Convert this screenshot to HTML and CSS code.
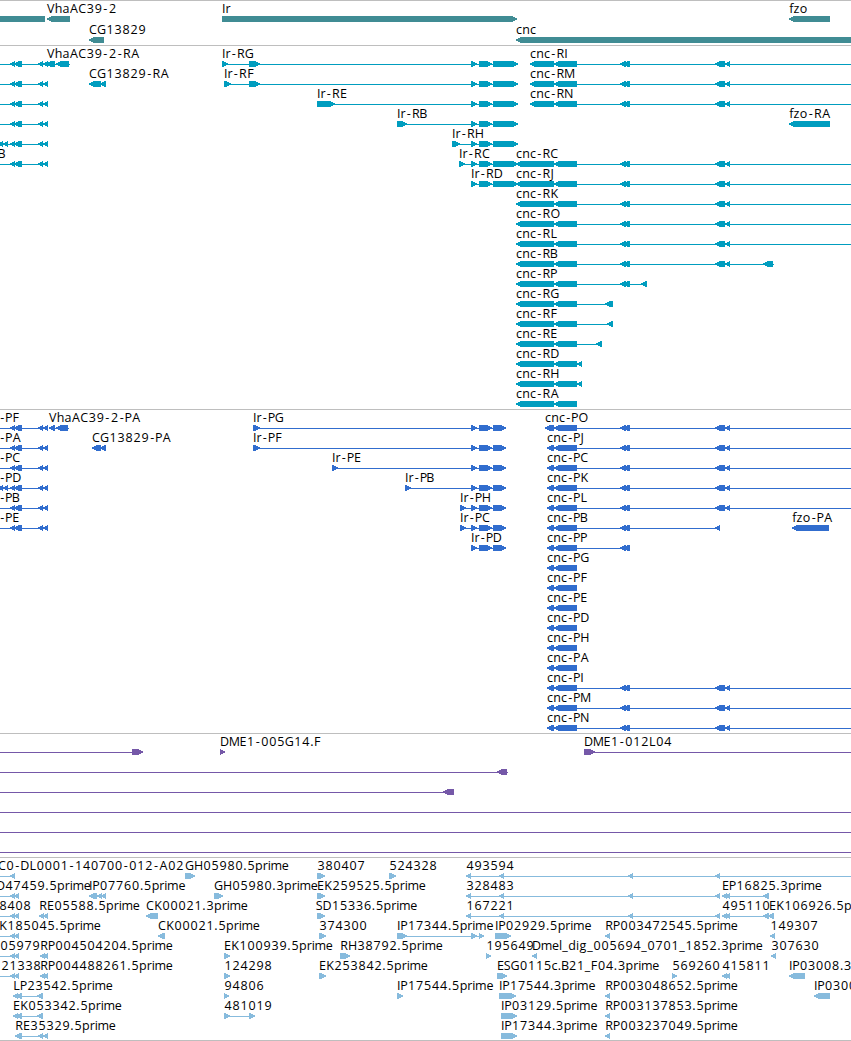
FILE: index.html
```html
<!DOCTYPE html>
<html lang="en">
<head>
<meta charset="utf-8">
<title>Genome tracks</title>
<link rel="stylesheet" href="styles.css">
</head>
<body>
<main class="browser" id="browser"></main>
<script src="tracks.js"></script>
</body>
</html>
```

FILE: styles.css
```css
body {
  margin: 0;
  background: #fff;
}

.browser {
  display: flex;
  flex-direction: column;
  width: 851px;
  height: 1041px;
  overflow: hidden;
}

.track {
  display: flex;
  flex-direction: column;
  flex: none;
  border-top: 1px solid #bebebe;
  padding-bottom: 3px;
}

.row {
  display: block;
  flex: none;
  width: 851px;
  height: 20px;
  overflow: visible;
}

.gene { color: #408c94; padding-bottom: 2px; }
.gene .row { height: 21px; }
.transcript { color: #009dbf; }
.protein { color: #316dce; }
.clone { color: #7558a8; }
.est { color: #87bbdd; padding-bottom: 2px; border-bottom: 1px solid #bebebe; }

.shape {
  fill: currentColor;
  shape-rendering: crispEdges;
}

.label {
  font: 12.5px "Open Sans", "Noto Sans", sans-serif;
  fill: #000;
}
```

FILE: tracks.js
```js
// Row syntax: "@x text" label, "a-b" line, "=a-b" plain bar,
// "<a-b" / ">a-b" exon pointing left / right. Items separated by "|".
const LEFT = "0-48|<10-15|<14-22|<38-43|<43-48";
const LEFT_D = LEFT + "|<-2-3|<3-8";
const IR = ">471-477|>479-492|>493-518";
const IRP = ">471-477|>479-492|>493-506";
const MID = "<620-626|<623-630";
const FAR = MID + "|<715-725|<725-730";
const CNC = "<516-554|<554-577";
const CNCP = "<547-554|<554-577";
const EST = "0-19|<10-15|<14-19";
const CHAIN = "<466-471|<499-504|<628-633|<715-720";

const tracks = [
  ["gene", [
    "=0-45|@47 VhaAC39-2|<47-70|@222 Ir|>222-517|@789 fzo|<789-830",
    "@89 CG13829|<89-104|@516 cnc|<516-860"
  ]],
  ["transcript", [
    `${LEFT}|@47 VhaAC39-2-RA|44-70|<46-55|<56-69|@222 Ir-RG|222-518|>222-228|>249-260|${IR}|@530 cnc-RI|530-851|<530-554|<554-577|${FAR}`,
    `${LEFT}|@89 CG13829-RA|<89-101|<100-106|@224 Ir-RF|224-518|>224-231|>249-260|${IR}|@530 cnc-RM|530-851|<530-554|<554-577|${FAR}`,
    `${LEFT}|@317 Ir-RE|317-518|>317-335|${IR}|@530 cnc-RN|530-851|<530-554|<554-577|${FAR}`,
    `${LEFT}|@397 Ir-RB|397-518|>397-407|${IR}|@789 fzo-RA|<789-830`,
    `${LEFT_D}|@452 Ir-RH|452-518|>452-460|${IR}`,
    `@-2 B|${LEFT}|@459 Ir-RC|459-518|>459-465|${IR}|@516 cnc-RC|516-851|${CNC}|${FAR}`,
    `@471 Ir-RD|471-518|${IR}|@516 cnc-RJ|516-851|${CNC}|${FAR}`,
    `@516 cnc-RK|516-851|${CNC}|${FAR}`,
    `@516 cnc-RO|516-851|${CNC}|${FAR}`,
    `@516 cnc-RL|516-851|${CNC}|${FAR}`,
    `@516 cnc-RB|516-774|${CNC}|${FAR}|<763-773`,
    `@516 cnc-RP|516-647|${CNC}|${MID}|<641-647`,
    `@516 cnc-RG|516-613|${CNC}|<605-613`,
    `@516 cnc-RF|516-613|${CNC}|<607-613`,
    `@516 cnc-RE|516-602|${CNC}|<596-602`,
    `@516 cnc-RD|${CNC}|<577-582`,
    `@516 cnc-RH|${CNC}|<577-582`,
    `@516 cnc-RA|${CNC}`
  ]],
  ["protein", [
    `@-1 -PF|${LEFT}|@49 VhaAC39-2-PA|49-69|<49-55|<56-68|@253 Ir-PG|253-506|>253-260|${IRP}|@545 cnc-PO|545-851|<545-554|<554-577|${FAR}`,
    `@-1 -PA|${LEFT}|@92 CG13829-PA|<92-101|<100-106|@253 Ir-PF|253-506|>253-260|${IRP}|@547 cnc-PJ|547-851|${CNCP}|${FAR}`,
    `@-1 -PC|${LEFT}|@332 Ir-PE|332-506|>332-338|${IRP}|@547 cnc-PC|547-851|${CNCP}|${FAR}`,
    `@-1 -PD|${LEFT_D}|@405 Ir-PB|405-506|>405-411|${IRP}|@547 cnc-PK|547-851|${CNCP}|${FAR}`,
    `@-1 -PB|${LEFT}|@460 Ir-PH|460-506|>460-466|${IRP}|@547 cnc-PL|547-851|${CNCP}|${FAR}`,
    `@-1 -PE|${LEFT}|@460 Ir-PC|460-506|>460-466|${IRP}|@547 cnc-PB|547-720|${CNCP}|${MID}|<715-720|@792 fzo-PA|<792-829`,
    `@471 Ir-PD|471-506|${IRP}|@547 cnc-PP|547-630|${CNCP}|${MID}`,
    ...["PG", "PF", "PE", "PD", "PH", "PA"].map(n => `@547 cnc-${n}|547-577|${CNCP}`),
    ...["PI", "PM", "PN"].map(n => `@547 cnc-${n}|547-851|${CNCP}|${FAR}`)
  ]],
  ["clone", [
    "0-143|>132-143|@220 DME1-005G14.F|>220-225|@584 DME1-012L04|584-851|>584-595",
    "0-508|<497-507",
    "0-454|<443-454",
    "0-851", "0-851", "0-851"
  ]],
  ["est", [
    `@-2 C0-DL0001-140700-012-A02|0-15|<10-15|@185 GH05980.5prime|>185-195|@317 380407|>317-325|@389 524328|>389-396|@466 493594|466-851|${CHAIN}`,
    `@-4 D47459.5prime|${EST}|@89 IP07760.5prime|89-106|<89-97|<97-102|<101-106|@214 GH05980.3prime|>214-223|@317 EK259525.5prime|>317-325|@466 328483|466-720|${CHAIN}|@722 EP16825.3prime|722-769|<722-727|<725-730|<763-769`,
    `@-1 8408|${EST}|@39 RE05588.5prime|<39-44|<43-48|@146 CK00021.3prime|<146-158|@316 SD15336.5prime|>317-325|@466 167221|466-720|${CHAIN}|@722 495110|722-774|<722-727|<725-730|<763-769|<768-774|@769 EK106926.5prime`,
    `@-1 K185045.5prime|${EST}|@158 CK00021.5prime|<158-165|@319 374300|>319-326|@397 IP17344.5prime|397-484|>397-407|>471-477|>479-484|@495 IP02929.5prime|>495-511|@605 RP003472545.5prime|<605-610|@770 149307|<770-775`,
    `@0 05979|${EST}|@40 RP004504204.5prime|<40-45|<43-48|@224 EK100939.5prime|>224-230|@340 RH38792.5prime|>340-350|@486 195649|>486-491|@532 Dmel_dig_005694_0701_1852.3prime|<532-537|@771 307630|<771-776`,
    `@-7 121338|${EST}|@40 RP004488261.5prime|<40-45|<43-48|@224 124298|>224-230|@319 EK253842.5prime|>319-326|@497 ESG0115c.B21_F04.3prime|>497-507|@672 569260|>672-677|@722 415811|<722-727|<725-730|@789 IP03008.3prime|<789-805`,
    "@13 LP23542.5prime|13-43|<13-18|<16-22|<37-43|@224 94806|>224-229|@397 IP17544.5prime|>397-403|@499 IP17544.3prime|>499-516|@605 RP003048652.5prime|<605-610|@814 IP03009.3prime|<814-830",
    "@13 EK053342.5prime|13-43|<13-18|<16-22|<37-43|@224 481019|224-255|>224-230|>249-255|@501 IP03129.5prime|>501-517|@605 RP003137853.5prime|<605-610",
    "@15 RE35329.5prime|15-48|<15-22|<38-43|<43-48|@501 IP17344.3prime|>501-517|@605 RP003237049.5prime|<605-610"
  ]]
];

// Character cell widths in pixels; digits default to 8.
const CELL = {
  A: 8.7, B: 7, C: 8, D: 9, E: 7, F: 7, G: 9, H: 9, I: 3.6, J: 4, K: 8, L: 7, M: 10.5,
  N: 9, O: 10, P: 7, R: 8, S: 6.5, V: 7.5, a: 7, c: 6, d: 8, e: 7, f: 4.5, g: 8, h: 8,
  i: 3, l: 3, m: 11, n: 8, o: 8, p: 7.8, r: 5, z: 6, "-": 6.3, ".": 4, _: 6
};

const NS = "http://www.w3.org/2000/svg";
const pen = document.createElement("canvas").getContext("2d");
pen.font = '12.5px "Open Sans", "Noto Sans", sans-serif';

function add(parent, name, attrs) {
  const el = document.createElementNS(NS, name);
  for (const k in attrs) el.setAttribute(k, attrs[k]);
  parent.appendChild(el);
  return el;
}

function drawLabel(svg, x, text) {
  const xs = [];
  for (const ch of text) {
    const cell = CELL[ch] || 8;
    xs.push((x + (cell - pen.measureText(ch).width) / 2).toFixed(2));
    x += cell;
  }
  add(svg, "text", { class: "label", y: 12, x: xs.join(" ") }).textContent = text;
}

function drawShape(svg, kind, a, b) {
  const w = b - a;
  const head = Math.min(5, w);
  let d;
  if (kind === "") d = `M${a} 18H${b}V19H${a}Z`;
  else if (kind === "=") d = `M${a} 15H${b}V21H${a}Z`;
  else if (kind === "<") d = `M${b} 15H${a + head}L${a} 17.2V18.8L${a + head} 21H${b}Z`;
  else d = `M${a} 15H${b - head}L${b} 17.2V18.8L${b - head} 21H${a}Z`;
  add(svg, "path", { class: "shape", d });
}

const root = document.getElementById("browser");
for (const [name, rows] of tracks) {
  const section = document.createElement("section");
  section.className = `track ${name}`;
  root.appendChild(section);
  for (const row of rows) {
    const svg = add(section, "svg", { class: "row" });
    for (const item of row.split("|")) {
      const label = item.match(/^@(-?\d+) (.+)$/);
      if (label) {
        drawLabel(svg, +label[1], label[2]);
        continue;
      }
      const m = item.match(/^([<>=]?)(-?\d+)-(\d+)$/);
      drawShape(svg, m[1], +m[2], +m[3]);
    }
  }
}
```
